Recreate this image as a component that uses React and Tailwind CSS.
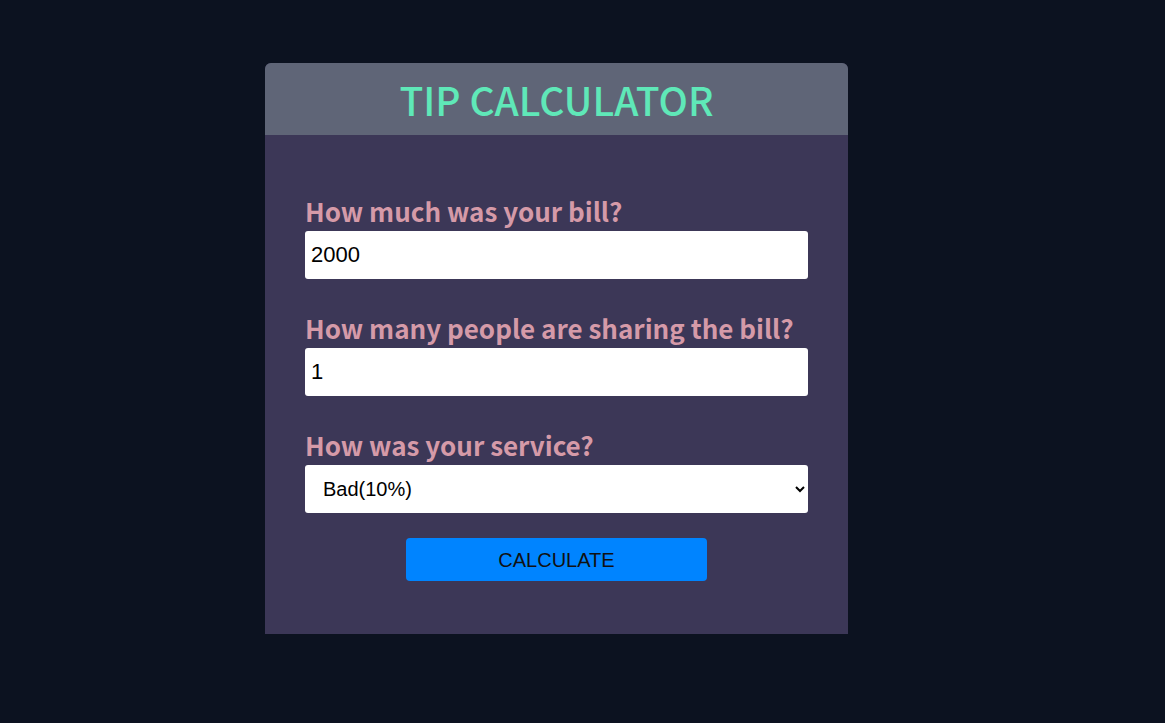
import React from "react";

const labelClass =
  "block mb-[8px] text-[26px] leading-[24px] text-[#d59aa8] font-['Noto_Sans_CJK_JP','Noto_Sans',sans-serif] font-bold";

export default function App() {
  return (
    <div className="min-h-[723px] w-full bg-[#0c1220] pt-[63px]">
      <div className="ml-[265px] w-[583px] overflow-hidden rounded-t-[6px] bg-[#3c3757]">
        {/* Header */}
        <div className="flex h-[72px] items-center justify-center bg-[#5f6577]">
          <h1 className="text-[39px] font-medium text-[#5fe8b8] font-['Noto_Sans_CJK_JP','Noto_Sans',sans-serif]">
            TIP CALCULATOR
          </h1>
        </div>

        {/* Form */}
        <div className="px-10 pt-[64px] pb-[53px]">
          <label className={labelClass}>How much was your bill?</label>
          <input
            type="text"
            defaultValue="2000"
            className="block h-12 w-full rounded-[3px] bg-white px-[6px] text-[22px] text-black outline-none font-['Liberation_Sans',Arial,sans-serif]"
          />

          <label className={`${labelClass} mt-[37px]`}>
            How many people are sharing the bill?
          </label>
          <input
            type="text"
            defaultValue="1"
            className="block h-12 w-full rounded-[3px] bg-white px-[6px] text-[22px] text-black outline-none font-['Liberation_Sans',Arial,sans-serif]"
          />

          <label className={`${labelClass} mt-[37px]`}>How was your service?</label>
          <select
            defaultValue="10"
            className="block h-12 w-full rounded-[3px] bg-white px-[14px] text-[20px] text-black outline-none font-['Liberation_Sans',Arial,sans-serif]"
          >
            <option value="10">Bad(10%)</option>
            <option value="15">Good(15%)</option>
            <option value="20">Great(20%)</option>
          </select>

          <div className="mt-[25px] flex justify-center">
            <button className="h-[43px] w-[301px] rounded-[4px] bg-[#0084ff] text-[20px] text-[#111] font-['Liberation_Sans',Arial,sans-serif]">
              CALCULATE
            </button>
          </div>
        </div>
      </div>
    </div>
  );
}
